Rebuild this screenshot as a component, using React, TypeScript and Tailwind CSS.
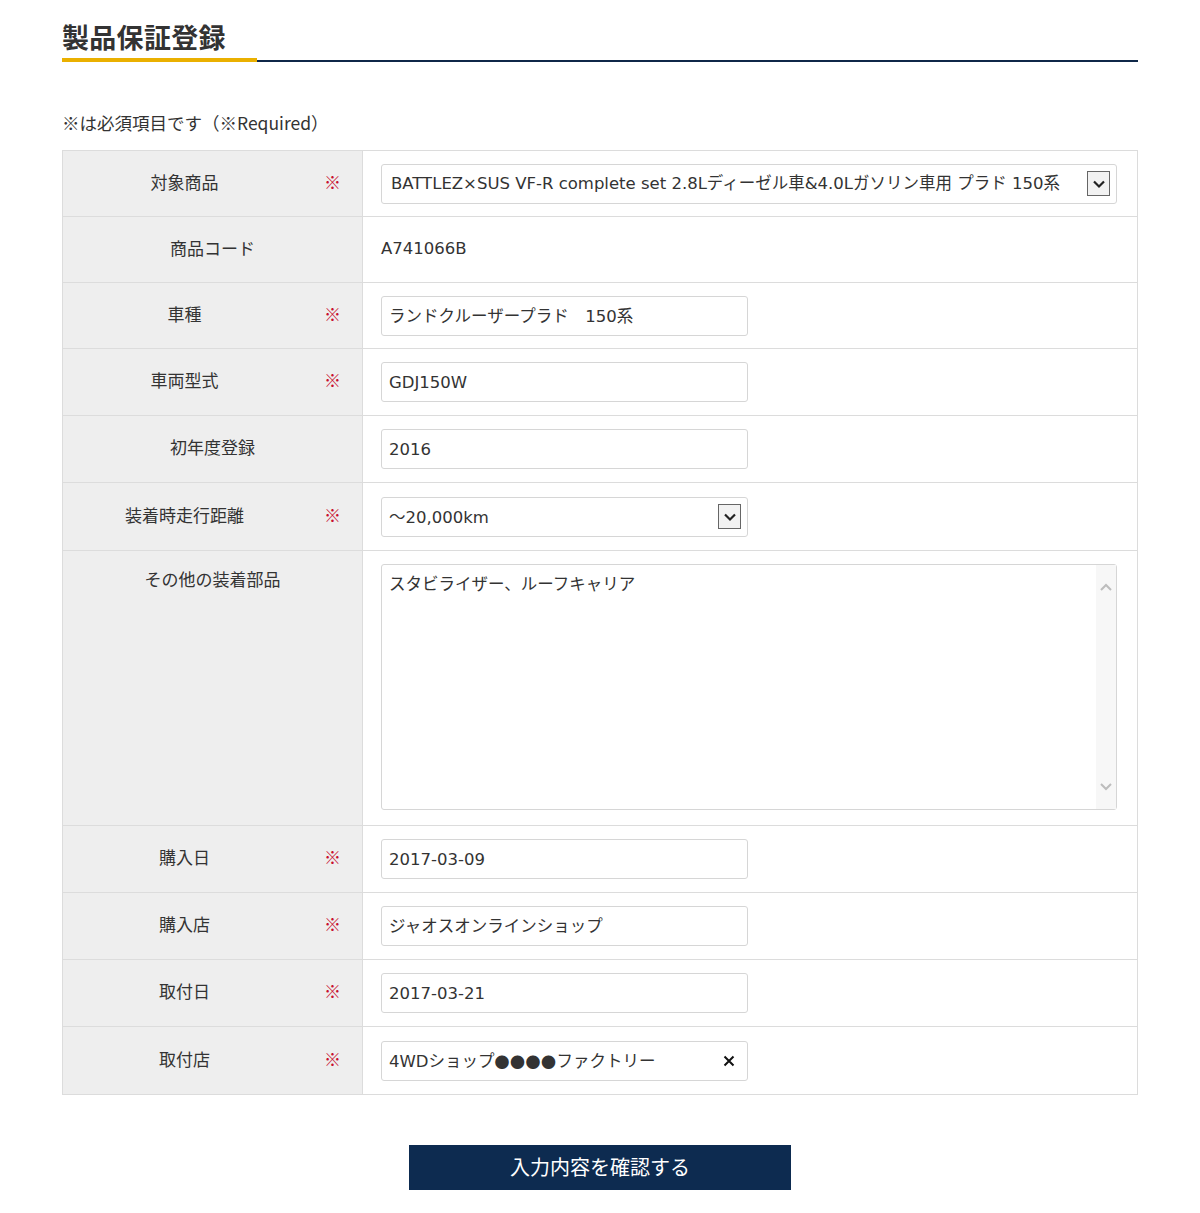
import React from "react";

const font = { fontFamily: '"Noto Sans CJK JP", "Noto Sans", sans-serif' };
const valueFont = { fontFamily: '"DejaVu Sans", "Noto Sans CJK JP", sans-serif' };

type Row = {
  label: string;
  required?: boolean;
  h: string;
  kind: "select" | "text" | "input" | "selectShort" | "textarea" | "clear";
  value: string;
};

const rows: Row[] = [
  { label: "対象商品", required: true, h: "h-[66px]", kind: "select", value: "BATTLEZ×SUS VF-R complete set 2.8Lディーゼル車&4.0Lガソリン車用 プラド 150系" },
  { label: "商品コード", h: "h-[66px]", kind: "text", value: "A741066B" },
  { label: "車種", required: true, h: "h-[66px]", kind: "input", value: "ランドクルーザープラド　150系" },
  { label: "車両型式", required: true, h: "h-[67px]", kind: "input", value: "GDJ150W" },
  { label: "初年度登録", h: "h-[67px]", kind: "input", value: "2016" },
  { label: "装着時走行距離", required: true, h: "h-[68px]", kind: "selectShort", value: "～20,000km" },
  { label: "その他の装着部品", h: "h-[275px]", kind: "textarea", value: "スタビライザー、ルーフキャリア" },
  { label: "購入日", required: true, h: "h-[67px]", kind: "input", value: "2017-03-09" },
  { label: "購入店", required: true, h: "h-[67px]", kind: "input", value: "ジャオスオンラインショップ" },
  { label: "取付日", required: true, h: "h-[67px]", kind: "input", value: "2017-03-21" },
  { label: "取付店", required: true, h: "h-[67px]", kind: "clear", value: "4WDショップ" },
];

function Arrow() {
  return (
    <div className="flex h-[25px] w-[23px] items-center justify-center border border-[#666] bg-[#f2f2f2]">
      <svg width="14" height="10" viewBox="0 0 14 10">
        <path d="M2 2.5 L7 7.5 L12 2.5" fill="none" stroke="#222" strokeWidth="2.2" />
      </svg>
    </div>
  );
}

function Field({ row }: { row: Row }) {
  const box = "flex h-[40px] items-center rounded-[3px] border border-[#d6d6d6] bg-white px-[7px] text-[16.5px] text-[#333]";
  switch (row.kind) {
    case "text":
      return <div className="text-[16.5px] text-[#333]">{row.value}</div>;
    case "select":
      return (
        <div className={`${box} h-[38px] w-[736px] justify-between pl-[9px] pr-[6px]`}>
          <span className="whitespace-nowrap pt-[2px]">{row.value}</span>
          <Arrow />
        </div>
      );
    case "selectShort":
      return (
        <div className={`${box} w-[367px] justify-between pr-[6px]`}>
          <span className="pt-[3px]">{row.value}</span>
          <Arrow />
        </div>
      );
    case "clear":
      return (
        <div className={`${box} w-[367px] justify-between pr-[12px]`}>
          <span className="flex items-center pt-[3px]">
            {row.value}
            <span className="text-[15px] tracking-[0.5px]" style={font}>●●●●</span>
            ファクトリー
          </span>
          <svg width="12" height="12" viewBox="0 0 12 12">
            <path d="M1.5 1.5 L10.5 10.5 M10.5 1.5 L1.5 10.5" stroke="#111" strokeWidth="2" />
          </svg>
        </div>
      );
    case "textarea":
      return (
        <div className="flex h-[246px] w-[736px] rounded-[3px] border border-[#d6d6d6] bg-white">
          <div className="flex-1 px-[7px] pt-[8px] text-[16.5px] text-[#333]">{row.value}</div>
          <div className="flex w-[20px] flex-col items-center justify-between bg-[#f7f7f7] py-[18px]">
            <svg width="14" height="9" viewBox="0 0 14 9">
              <path d="M2 7 L7 2 L12 7" fill="none" stroke="#bdbdbd" strokeWidth="2" />
            </svg>
            <svg width="14" height="9" viewBox="0 0 14 9">
              <path d="M2 2 L7 7 L12 2" fill="none" stroke="#bdbdbd" strokeWidth="2" />
            </svg>
          </div>
        </div>
      );
    default:
      return (
        <div className={`${box} w-[367px]`}>
          <span className="pt-[3px]">{row.value}</span>
        </div>
      );
  }
}

export default function App() {
  return (
    <div className="min-h-[1213px] bg-white px-[62px] text-[#333]" style={font}>
      <h1 className="pt-[18px] text-[27px] font-bold leading-[38px] tracking-[0.3px] text-[#333]">製品保証登録</h1>
      <div className="mt-[2px] flex items-end">
        <div className="h-[4px] w-[195px] bg-[#eab000]" />
        <div className="h-[2px] flex-1 bg-[#0f2748]" />
      </div>

      <p className="mt-[49px] text-[17.5px] leading-[24px]">※は必須項目です（※Required）</p>

      <div className="mt-[15px] border border-[#dcdcdc]">
        {rows.map((row, i) => (
          <div key={i} className={`flex ${row.h} ${i < rows.length - 1 ? "border-b border-[#dcdcdc]" : ""}`}>
            <div className={`flex w-[299px] shrink-0 bg-[#eeeeee] text-[17px] ${row.kind === "textarea" ? "items-start pt-[15px]" : "items-center pb-[4px]"}`}>
              {row.required ? (
                <>
                  <span className="flex-1 text-center">{row.label}</span>
                  <span className="w-[56px] pl-[18px] text-[#c8102e]">※</span>
                </>
              ) : (
                <span className="flex-1 text-center">{row.label}</span>
              )}
            </div>
            <div
              className={`flex flex-1 border-l border-[#dcdcdc] pl-[18px] ${row.kind === "textarea" ? "items-start pt-[13px]" : "items-center"}`}
              style={valueFont}
            >
              <Field row={row} />
            </div>
          </div>
        ))}
      </div>

      <div className="mt-[50px] flex justify-center">
        <button className="h-[45px] w-[382px] bg-[#0d2b50] pb-[2px] text-[20px] text-white">入力内容を確認する</button>
      </div>
    </div>
  );
}
